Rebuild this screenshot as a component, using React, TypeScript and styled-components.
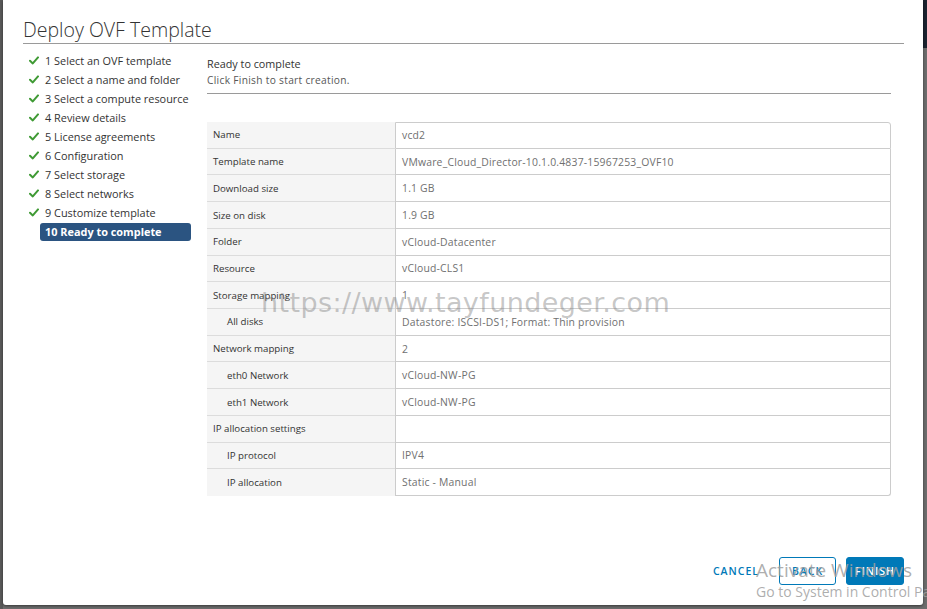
import React from "react";
import styled, { createGlobalStyle } from "styled-components";

const Global = createGlobalStyle`
  html, body { margin: 0; padding: 0; }
  body {
    width: 927px; height: 609px; overflow: hidden;
    background: #666;
    font-family: "Open Sans", "Noto Sans", sans-serif;
  }
  * { box-sizing: border-box; }
`;

const Page = styled.div`
  position: relative;
  width: 927px;
  height: 609px;
  overflow: hidden;
  display: flex;
  background: linear-gradient(to bottom, #1b2330 0, #1b2330 48px, #6d6d6d 48px);
`;

const LeftStrip = styled.div`
  width: 3px;
  background: #5a5a5a;
`;

const Modal = styled.div`
  position: relative;
  width: 920px;
  height: 605px;
  background: #fff;
  border-radius: 0 0 3px 3px;
  box-shadow: 0 1px 3px rgba(0, 0, 0, 0.5);
  display: flex;
  flex-direction: column;
  padding: 0 19px 20px 20px;
`;

const Title = styled.h1`
  margin: 0;
  padding: 18px 0 1px;
  font-size: 19.5px;
  line-height: 24px;
  font-weight: 300;
  color: #333;
  border-bottom: 1px solid #9a9a9a;
`;

const Body = styled.div`
  flex: 1;
  display: flex;
`;

const Steps = styled.ul`
  list-style: none;
  margin: 0;
  padding: 7px 0 0;
  width: 184px;
  flex-shrink: 0;
`;

const Step = styled.li`
  height: 19px;
  display: flex;
  align-items: center;
  position: relative;
  padding-left: 17px;
`;

const Check = styled.svg`
  position: absolute;
  left: 6px;
  top: 5px;
`;

const StepLabel = styled.span<{ $active?: boolean }>`
  width: 151px;
  height: 18px;
  display: flex;
  align-items: center;
  padding: 0 5px;
  border-radius: 3px;
  font-size: 10.9px;
  white-space: nowrap;
  color: ${(p) => (p.$active ? "#fff" : "#333")};
  font-weight: ${(p) => (p.$active ? 700 : 400)};
  background: ${(p) => (p.$active ? "#2b5481" : "transparent")};
`;

const Content = styled.div`
  flex: 1;
  display: flex;
  flex-direction: column;
  padding-right: 13px;
`;

const Head = styled.div`
  padding: 12px 0 5px;
  border-bottom: 1px solid #9a9a9a;
`;

const HeadTitle = styled.div`
  font-size: 10.8px;
  line-height: 15px;
  color: #333;
`;

const HeadSub = styled.div`
  font-size: 10.2px;
  letter-spacing: 0.3px;
  line-height: 16px;
  margin-top: 1px;
  color: #565656;
`;

const Table = styled.div`
  margin-top: 28px;
  display: grid;
  grid-template-columns: 188px 1fr;
  grid-auto-rows: 26.72px;
`;

const Label = styled.div<{ $indent?: boolean; $last?: boolean }>`
  background: #f5f5f5;
  border-bottom: ${(p) => (p.$last ? "none" : "1px solid #dcdcdc")};
  display: flex;
  align-items: center;
  padding-left: ${(p) => (p.$indent ? "20px" : "6px")};
  font-size: 9.7px;
  color: #333;
  white-space: nowrap;
`;

const Value = styled.div<{ $first?: boolean; $last?: boolean }>`
  border-left: 1px solid #cccccc;
  border-right: 1px solid #cccccc;
  border-top: ${(p) => (p.$first ? "1px solid #cccccc" : "none")};
  border-bottom: 1px solid #cccccc;
  border-radius: ${(p) => (p.$first ? "0 3px 0 0" : p.$last ? "0 0 3px 0" : "0")};
  display: flex;
  align-items: center;
  padding-left: 6px;
  font-size: 10.4px;
  letter-spacing: 0.2px;
  color: #707070;
  white-space: nowrap;
`;

const Footer = styled.div`
  display: flex;
  justify-content: flex-end;
  align-items: center;
  gap: 10px;
`;

const LinkButton = styled.button`
  border: none;
  background: none;
  color: #0079b8;
  font-family: inherit;
  font-size: 10.5px;
  letter-spacing: 1px;
  font-weight: 600;
  padding: 0 10px 0 0;
  height: 28px;
`;

const Button = styled.button<{ $primary?: boolean }>`
  height: 28px;
  border-radius: 3px;
  border: 1px solid #0079b8;
  background: ${(p) => (p.$primary ? "#0079b8" : "#fff")};
  color: ${(p) => (p.$primary ? "#fff" : "#0079b8")};
  font-family: inherit;
  font-size: 10.5px;
  font-weight: 600;
  letter-spacing: 1px;
  padding: 0;
  width: ${(p) => (p.$primary ? "58px" : "57px")};
`;

const Watermark = styled.div`
  position: absolute;
  left: 261px;
  top: 287px;
  font-size: 27px;
  font-family: "DejaVu Sans", sans-serif;
  font-weight: 400;
  color: rgba(130, 130, 130, 0.45);
  letter-spacing: 0.4px;
  pointer-events: none;
  white-space: nowrap;
`;

const Activate = styled.div`
  position: absolute;
  left: 756px;
  top: 557px;
  color: rgba(160, 160, 160, 0.85);
  font-family: "Open Sans", sans-serif;
  pointer-events: none;
  white-space: nowrap;
`;

const ActivateTitle = styled.div`
  font-size: 19px;
  line-height: 26px;
`;

const ActivateSub = styled.div`
  font-size: 14px;
  line-height: 18px;
`;

const steps = [
  "1 Select an OVF template",
  "2 Select a name and folder",
  "3 Select a compute resource",
  "4 Review details",
  "5 License agreements",
  "6 Configuration",
  "7 Select storage",
  "8 Select networks",
  "9 Customize template",
  "10 Ready to complete",
];

const rows: { label: string; value: string; indent?: boolean }[] = [
  { label: "Name", value: "vcd2" },
  { label: "Template name", value: "VMware_Cloud_Director-10.1.0.4837-15967253_OVF10" },
  { label: "Download size", value: "1.1 GB" },
  { label: "Size on disk", value: "1.9 GB" },
  { label: "Folder", value: "vCloud-Datacenter" },
  { label: "Resource", value: "vCloud-CLS1" },
  { label: "Storage mapping", value: "1" },
  { label: "All disks", value: "Datastore: ISCSI-DS1; Format: Thin provision", indent: true },
  { label: "Network mapping", value: "2" },
  { label: "eth0 Network", value: "vCloud-NW-PG", indent: true },
  { label: "eth1 Network", value: "vCloud-NW-PG", indent: true },
  { label: "IP allocation settings", value: "" },
  { label: "IP protocol", value: "IPV4", indent: true },
  { label: "IP allocation", value: "Static - Manual", indent: true },
];

const CheckIcon = () => (
  <Check width="10" height="9" viewBox="0 0 10 9">
    <path d="M1 4.8 L3.8 7.4 L9 1.4" fill="none" stroke="#3f9a34" strokeWidth="2" strokeLinecap="round" strokeLinejoin="round" />
  </Check>
);

export default function App() {
  return (
    <Page>
      <Global />
      <LeftStrip />
      <Modal>
        <Title>Deploy OVF Template</Title>
        <Body>
          <Steps>
            {steps.map((s, i) => {
              const active = i === steps.length - 1;
              return (
                <Step key={s}>
                  {!active && <CheckIcon />}
                  <StepLabel $active={active}>{s}</StepLabel>
                </Step>
              );
            })}
          </Steps>
          <Content>
            <Head>
              <HeadTitle>Ready to complete</HeadTitle>
              <HeadSub>Click Finish to start creation.</HeadSub>
            </Head>
            <Table>
              {rows.map((r, i) => (
                <React.Fragment key={r.label}>
                  <Label $indent={r.indent} $last={i === rows.length - 1}>{r.label}</Label>
                  <Value $first={i === 0} $last={i === rows.length - 1}>{r.value}</Value>
                </React.Fragment>
              ))}
            </Table>
          </Content>
        </Body>
        <Footer>
          <LinkButton>CANCEL</LinkButton>
          <Button>BACK</Button>
          <Button $primary>FINISH</Button>
        </Footer>
      </Modal>
      <Watermark>https://www.tayfundeger.com</Watermark>
      <Activate>
        <ActivateTitle>Activate Windows</ActivateTitle>
        <ActivateSub>Go to System in Control Panel to activate Windows.</ActivateSub>
      </Activate>
    </Page>
  );
}
